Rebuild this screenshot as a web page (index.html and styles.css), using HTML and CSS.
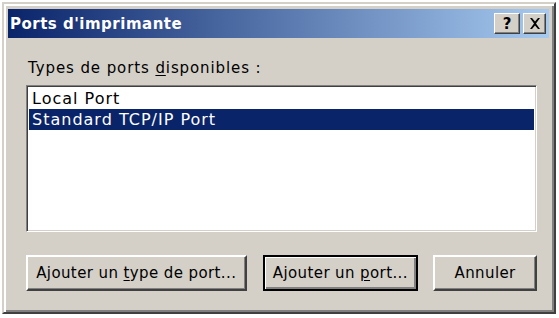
FILE: index.html
```html
<!DOCTYPE html>
<html lang="fr">
<head>
<meta charset="utf-8">
<link rel="stylesheet" href="styles.css">
</head>
<body>
<div class="window">
  <div class="titlebar">
    <span class="title">Ports d'imprimante</span>
    <div class="caption-btns">
      <span class="cbtn help">?</span>
      <span class="cbtn close"><svg width="12" height="11" viewBox="0 0 12 11"><path d="M1 0h2l3 3.5 3-3.5h2l-4 5.5 4 5.5h-2l-3-3.5-3 3.5h-2l4-5.5z" fill="#000"/></svg></span>
    </div>
  </div>
  <div class="content">
    <div class="label">Types de ports <u>d</u>isponibles :</div>
    <div class="listbox">
      <div class="item">Local Port</div>
      <div class="item selected">Standard TCP/IP Port</div>
    </div>
    <div class="buttons">
      <div class="btn wide"><span>Ajouter un <u>t</u>ype de port...</span></div>
      <div class="btn default"><span>Ajouter un <u>p</u>ort...</span></div>
      <div class="btn cancel"><span>Annuler</span></div>
    </div>
  </div>
</div>
</body>
</html>
```
FILE: styles.css
```css
html, body { margin: 0; padding: 0; background: #fff; }
body { padding: 2px; font-family: "DejaVu Sans", Tahoma, sans-serif; font-size: 15px; letter-spacing: 0.9px; color: #000; }
.window {
  width: 554px; height: 312px; box-sizing: border-box;
  background: #d4d0c8;
  border-top: 2px solid #d4d0c8; border-left: 2px solid #d4d0c8;
  border-right: 2px solid #404040; border-bottom: 2px solid #404040;
  box-shadow: inset 2px 2px 0 #fff, inset -2px -2px 0 #808080;
  padding: 5px 5px 0 4px;
  display: flex; flex-direction: column;
}
.titlebar {
  height: 29px; display: flex; align-items: center; justify-content: space-between;
  background: linear-gradient(to right, #0a246a, #a6caf0);
  padding: 0 3px 0 2px;
}
.title { color: #fff; font-weight: bold; font-size: 15px; letter-spacing: 0.5px; }
.caption-btns { display: flex; gap: 3px; }
.cbtn {
  width: 23px; height: 21px; box-sizing: border-box; background: #d4d0c8;
  border-top: 1px solid #fff; border-left: 1px solid #fff;
  border-right: 1px solid #404040; border-bottom: 1px solid #404040;
  box-shadow: inset -1px -1px 0 #808080;
  display: flex; align-items: center; justify-content: center;
  font-weight: bold; font-size: 15px; letter-spacing: 0;
}
.help { width: 26px; }
.content { flex: 1; padding: 21px 12px 0 18px; display: flex; flex-direction: column; }
.label { height: 18px; line-height: 18px; padding-left: 2px; margin-bottom: 8px; }
u { text-decoration: underline; text-underline-offset: 2px; }
.listbox {
  height: 147px; box-sizing: border-box; background: #fff;
  border-top: 1px solid #808080; border-left: 1px solid #808080;
  border-right: 1px solid #fff; border-bottom: 1px solid #fff;
  box-shadow: inset 1px 1px 0 #404040, inset -1px -1px 0 #d4d0c8;
  padding: 2px 2px;
}
.item { height: 21px; line-height: 21px; padding-left: 3px; font-size: 16px; letter-spacing: 1px; }
.item.selected { background: #0a246a; color: #fff; }
.buttons { display: flex; margin-top: 23px; }
.btn {
  height: 36px; box-sizing: border-box; background: #d4d0c8;
  border-top: 2px solid #fff; border-left: 2px solid #fff;
  border-right: 2px solid #404040; border-bottom: 2px solid #404040;
  box-shadow: inset -1px -1px 0 #808080;
  display: flex; align-items: center; justify-content: center;
  letter-spacing: 0.4px;
}
.btn.wide { width: 221px; }
.btn.default { width: 156px; margin-left: 16px; border: 2px solid #000; box-shadow: inset 1px 1px 0 #fff, inset -2px -2px 0 #808080; }
.btn.cancel { width: 104px; margin-left: 15px; }
```
